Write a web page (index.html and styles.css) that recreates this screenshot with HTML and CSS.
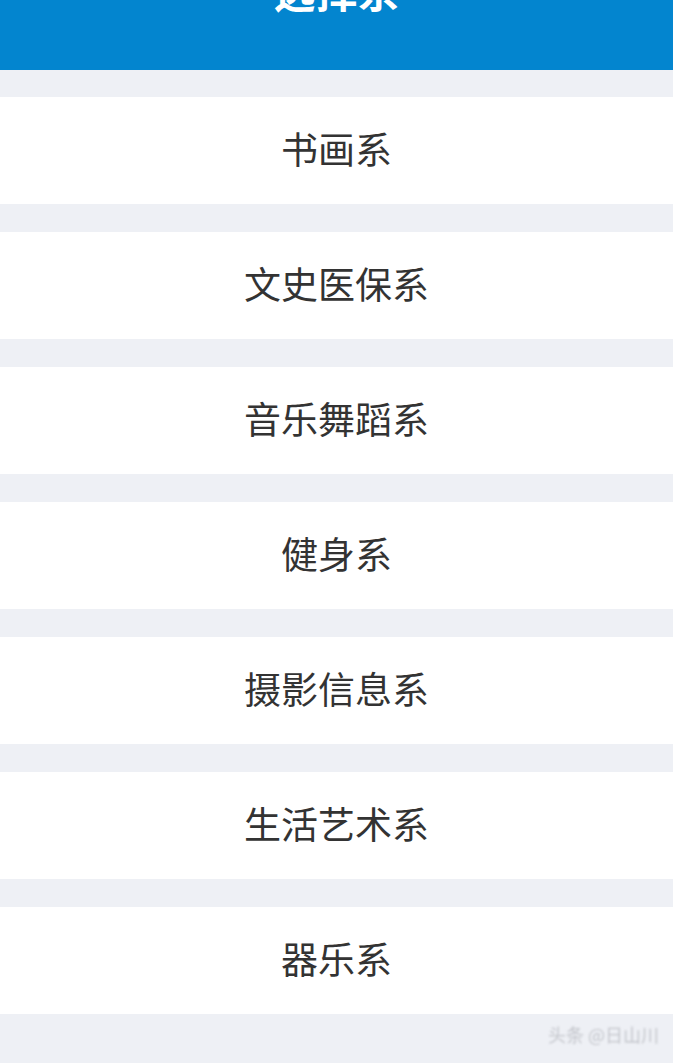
FILE: index.html
```html
<!DOCTYPE html>
<html lang="zh">
<head>
<meta charset="utf-8">
<link rel="stylesheet" href="styles.css">
</head>
<body>
<header class="top"><h1 class="title">选择系</h1></header>
<main class="list">
  <div class="item">书画系</div>
  <div class="item">文史医保系</div>
  <div class="item">音乐舞蹈系</div>
  <div class="item">健身系</div>
  <div class="item">摄影信息系</div>
  <div class="item">生活艺术系</div>
  <div class="item">器乐系</div>
</main>
<div class="mark">头条 @日山川</div>
</body>
</html>
```
FILE: styles.css
```css
html, body {
  margin: 0;
  padding: 0;
  background: #eef0f5;
  font-family: "Noto Sans CJK SC", "Noto Sans", sans-serif;
}
body {
  width: 673px;
  height: 1063px;
  overflow: hidden;
  position: relative;
}
.top {
  height: 70px;
  background: #0385cf;
  display: flex;
  justify-content: center;
  align-items: flex-start;
  overflow: hidden;
}
.title {
  margin: -31px 0 0 0;
  font-size: 42px;
  line-height: 42px;
  font-weight: 700;
  color: #ffffff;
  letter-spacing: 0;
}
.list {
  display: flex;
  flex-direction: column;
  gap: 28px;
  padding-top: 27px;
}
.item {
  height: 107px;
  box-sizing: border-box;
  padding-bottom: 5px;
  background: #ffffff;
  display: flex;
  align-items: center;
  justify-content: center;
  font-size: 37px;
  color: #333333;
}
.mark {
  position: absolute;
  right: 14px;
  bottom: 16px;
  font-size: 18px;
  color: #c4c6cc;
  filter: blur(1.2px);
}
```
